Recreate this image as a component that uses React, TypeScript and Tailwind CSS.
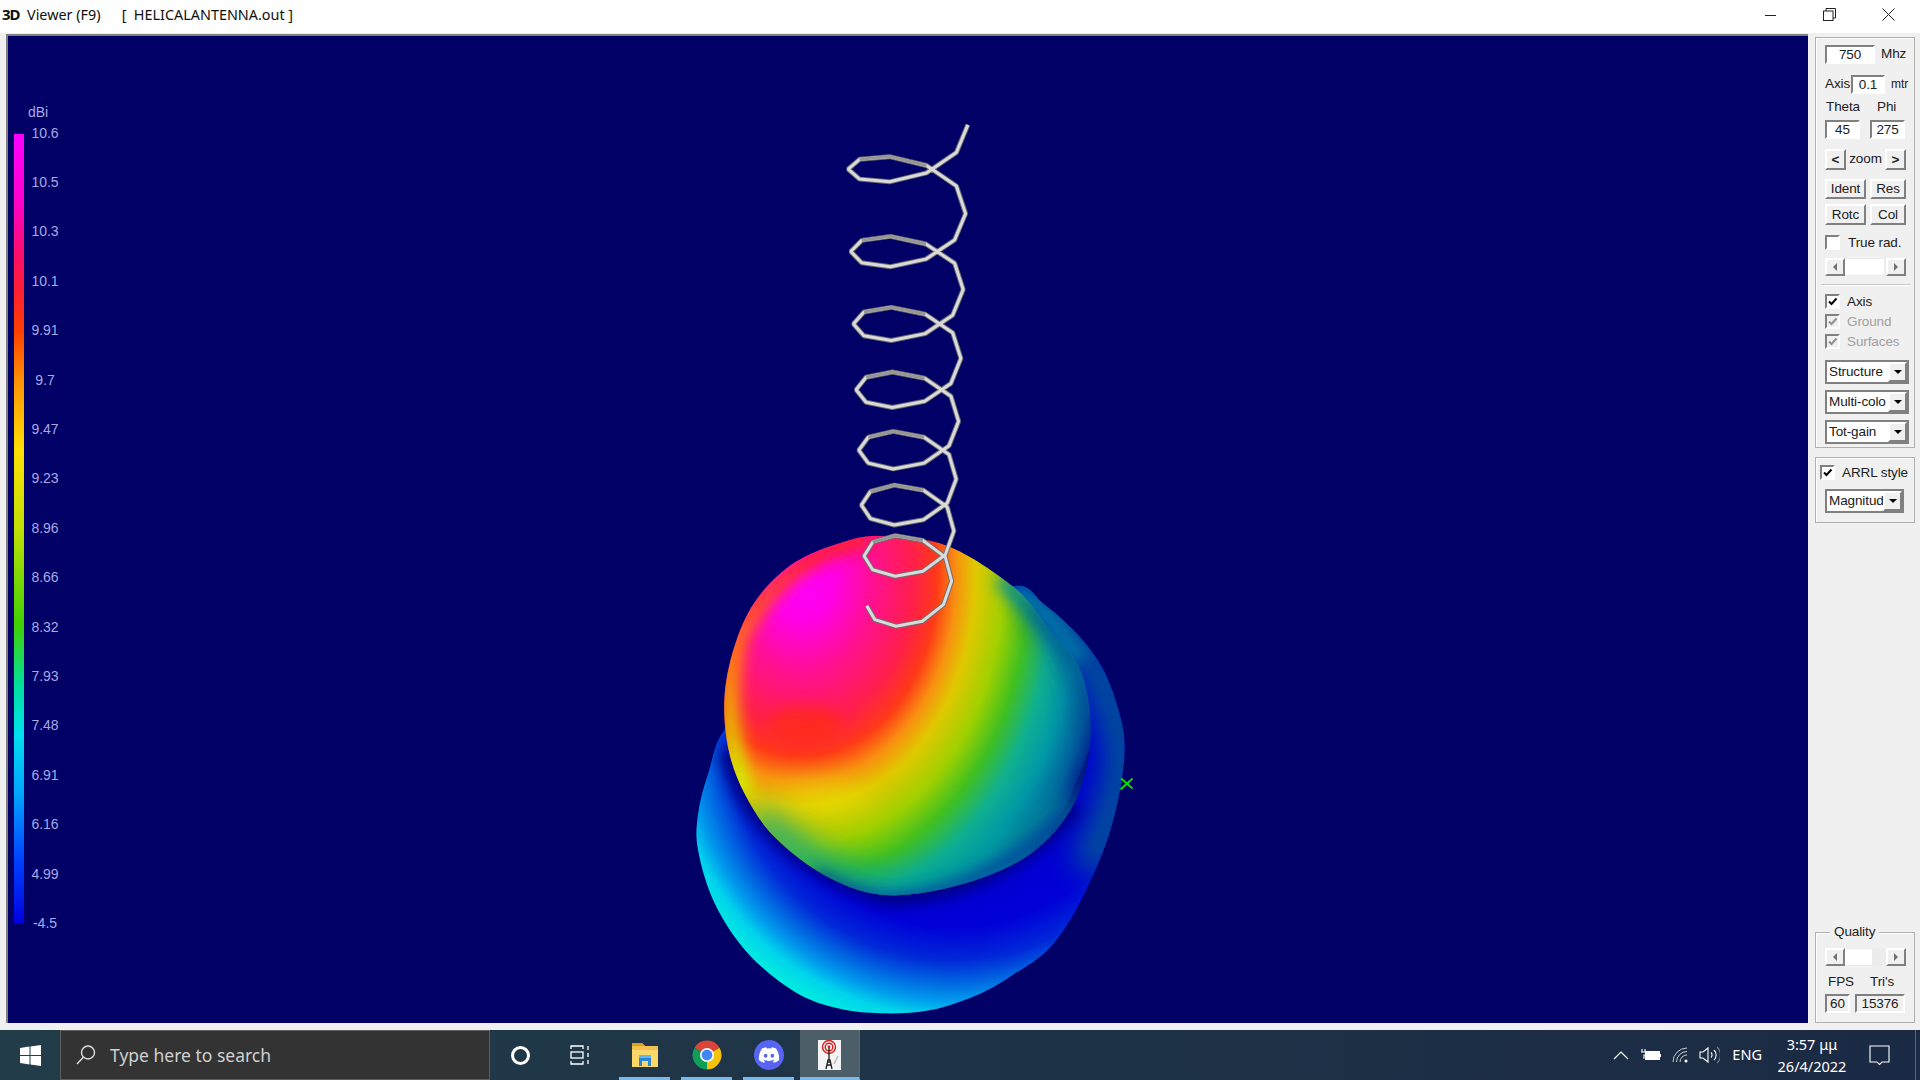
import { FaDiscord } from "react-icons/fa";

const legend = ["10.6", "10.5", "10.3", "10.1", "9.91", "9.7", "9.47", "9.23", "8.96", "8.66", "8.32", "7.93", "7.48", "6.91", "6.16", "4.99", "-4.5"];

// outlines traced from the plot, in zoom coordinates (3x, origin 680,520)
const upperBlob: [number, number][] = [
  [600, 45], [480, 65], [340, 125], [230, 230], [165, 360], [130, 520], [140, 680], [190, 820], [280, 950], [440, 1070],
  [620, 1125], [850, 1090], [1050, 1000], [1180, 850], [1230, 650], [1200, 450], [1100, 320], [1000, 200], [800, 75],
];
const lowerBlob: [number, number][] = [
  [135, 620], [80, 760], [50, 880], [50, 990], [100, 1150], [200, 1300], [340, 1415], [470, 1465], [600, 1480], [750, 1470], [900, 1420],
  [1000, 1362], [1100, 1290], [1180, 1180], [1265, 1000], [1310, 850], [1332, 700], [1320, 590], [1270, 450], [1190, 340], [1090, 250], [1000, 195], [800, 300], [300, 500],
];

function smooth(points: [number, number][]) {
  const n = points.length;
  let d = `M${points[0][0]} ${points[0][1]}`;
  for (let i = 0; i < n; i++) {
    const p0 = points[(i - 1 + n) % n];
    const p1 = points[i];
    const p2 = points[(i + 1) % n];
    const p3 = points[(i + 2) % n];
    d += `C${p1[0] + (p2[0] - p0[0]) / 6} ${p1[1] + (p2[1] - p0[1]) / 6} ${p2[0] - (p3[0] - p1[0]) / 6} ${p2[1] - (p3[1] - p1[1]) / 6} ${p2[0]} ${p2[1]}`;
  }
  return d + "Z";
}

// helix wire: one entry per turn, right-hand extreme y of each turn
const rightY = [123, 212, 288, 357, 420, 478, 530, 580, 630];
function helixPoints() {
  const pts: [number, number][] = [];
  const back: string[] = [];
  rightY.slice(0, -1).forEach((y, n) => {
    const left = 847 + (n * 16) / 6;
    const right = 967 - (n * 14) / 6;
    const cx = (left + right) / 2;
    const rx = (right - left) / 2;
    const last = n === 7 ? 5 : 9;
    const at = (i: number): [number, number] => {
      const a = (Math.PI * 2 * i) / 10;
      return [cx + rx * Math.cos(a), y + ((rightY[n + 1] - y) * i) / 10 + 32 * Math.sin(a)];
    };
    for (let i = 0; i <= last; i++) pts.push(at(i));
    if (n < 7) back.push(`M${at(6).join(" ")}L${at(7).join(" ")}L${at(8).join(" ")}`);
  });
  return { pts, back: back.join("") };
}

function Plot() {
  const upper = smooth(upperBlob);
  const lower = smooth(lowerBlob);
  const { pts, back } = helixPoints();
  const wireLine = "M" + pts.map((p) => `${p[0].toFixed(1)} ${p[1].toFixed(1)}`).join("L");
  return (
    <svg className="absolute inset-0 h-full w-full" viewBox="6 34 1802 989">
      <defs>
        <radialGradient id="lowerFill" gradientUnits="userSpaceOnUse" cx="820" cy="640" r="1000">
          <stop offset="0" stopColor="#0000c0" />
          <stop offset="0.58" stopColor="#0000d8" />
          <stop offset="0.68" stopColor="#0028d8" />
          <stop offset="0.74" stopColor="#0060e0" />
          <stop offset="0.8" stopColor="#0098ec" />
          <stop offset="0.85" stopColor="#00d4ec" />
          <stop offset="0.9" stopColor="#00e8e0" />
        </radialGradient>
        <radialGradient id="upperFill" gradientUnits="userSpaceOnUse" cx="0" cy="0" r="1000" gradientTransform="translate(360 170) scale(0.95 1.25)">
          <stop offset="0" stopColor="#ff00ff" />
          <stop offset="0.1" stopColor="#ff00e8" />
          <stop offset="0.23" stopColor="#ff1090" />
          <stop offset="0.36" stopColor="#ff2048" />
          <stop offset="0.43" stopColor="#ff3a18" />
          <stop offset="0.49" stopColor="#f89010" />
          <stop offset="0.55" stopColor="#e0c800" />
          <stop offset="0.64" stopColor="#a0d000" />
          <stop offset="0.72" stopColor="#40c020" />
          <stop offset="0.8" stopColor="#10b090" />
          <stop offset="0.88" stopColor="#0098a8" />
          <stop offset="0.96" stopColor="#0068a0" />
          <stop offset="1.04" stopColor="#002c98" />
          <stop offset="1.1" stopColor="#000c80" />
        </radialGradient>
        <linearGradient id="leftEdge" gradientUnits="userSpaceOnUse" x1="0" y1="100" x2="0" y2="760">
          <stop offset="0" stopColor="#ff2020" />
          <stop offset="0.5" stopColor="#ff9000" />
          <stop offset="1" stopColor="#d0f000" />
        </linearGradient>
        <clipPath id="upperClip"><path d={upper} /></clipPath>
        <clipPath id="lowerClip"><path d={lower} /></clipPath>
        <filter id="blurSoft" filterUnits="userSpaceOnUse" x="-300" y="-300" width="2200" height="2200"><feGaussianBlur stdDeviation="22" /></filter>
        <filter id="blurWide" filterUnits="userSpaceOnUse" x="-300" y="-300" width="2200" height="2200"><feGaussianBlur stdDeviation="45" /></filter>
      </defs>

      <g transform="translate(680 520) scale(0.33333)">
        <path d={lower} fill="url(#lowerFill)" />
        <g clipPath="url(#lowerClip)">
          <path d="M1000 195Q1280 380 1332 700Q1320 860 1220 1050" fill="none" stroke="#006488" strokeWidth="110" opacity="0.85" filter="url(#blurWide)" />
          <path d="M1000 200L1100 290L1200 420" fill="none" stroke="#0088a8" strokeWidth="50" opacity="0.8" filter="url(#blurSoft)" />
          <path d="M140 680Q220 1000 620 1125Q950 1110 1180 850" fill="none" stroke="#00007c" strokeWidth="60" filter="url(#blurSoft)" />
        </g>
        <path d={upper} fill="url(#upperFill)" />
        <g clipPath="url(#upperClip)">
          <path d="M560 50Q300 110 170 350Q110 560 190 820" fill="none" stroke="url(#leftEdge)" strokeWidth="50" filter="url(#blurSoft)" />
          <ellipse cx="370" cy="610" rx="110" ry="55" fill="#ff3000" opacity="0.55" filter="url(#blurSoft)" />
          <ellipse cx="420" cy="830" rx="150" ry="40" fill="#e8f000" opacity="0.6" filter="url(#blurWide)" />
          <path d="M960 170L1100 320L1200 450" fill="none" stroke="#0088a0" strokeWidth="50" opacity="0.9" filter="url(#blurSoft)" />
          <path d="M1060 240Q1240 420 1240 650Q1230 900 1050 1000" fill="none" stroke="#00308c" strokeWidth="70" opacity="0.75" filter="url(#blurWide)" />
          <path d="M230 890Q420 1080 620 1120Q900 1105 1180 850" fill="none" stroke="#00a098" strokeWidth="80" opacity="0.85" filter="url(#blurWide)" />
          <path d="M400 1060Q500 1120 620 1140Q900 1125 1160 880" fill="none" stroke="#0038a0" strokeWidth="36" opacity="0.9" filter="url(#blurSoft)" />
        </g>
      </g>

      <path d={wireLine} fill="none" stroke="#6e6e6e" strokeWidth="5" strokeLinejoin="bevel" />
      <path d={wireLine} fill="none" stroke="#dadada" strokeWidth="3" strokeLinejoin="bevel" />
      <path d={back} fill="none" stroke="#969696" strokeWidth="3" />
      <path d="M1120.5 778L1132 788M1120 789L1132 778" fill="none" stroke="#00e000" strokeWidth="2" />
    </svg>
  );
}

function Sunken({ className, children }: { className: string; children?: React.ReactNode }) {
  return (
    <div className={`flex h-[19px] items-center justify-center border-2 border-t-[#808080] border-l-[#808080] border-r-white border-b-white ${className}`}>
      {children}
    </div>
  );
}

function Btn({ className, children }: { className: string; children: React.ReactNode }) {
  return (
    <div className={`flex items-center justify-center border-2 border-t-white border-l-white border-r-[#808080] border-b-[#808080] bg-[#f0f0f0] ${className}`}>
      {children}
    </div>
  );
}

function Check({ label, disabled, className }: { label: string; disabled?: boolean; className?: string }) {
  return (
    <div className={`flex h-[15px] items-center ${className ?? ""}`}>
      <div className={`flex h-[15px] w-[15px] items-center justify-center border-2 border-t-[#808080] border-l-[#808080] border-r-white border-b-white ${disabled ? "bg-[#f0f0f0]" : "bg-white"}`}>
        <svg width="11" height="11" viewBox="0 0 11 11">
          <path d="M2 5.5L4.5 8L9.5 2.5" fill="none" stroke={disabled ? "#909090" : "#000000"} strokeWidth="2" />
        </svg>
      </div>
      <span className={`ml-[7px] ${disabled ? "text-[#a0a0a0]" : ""}`}>{label}</span>
    </div>
  );
}

function Combo({ label, className }: { label: string; className: string }) {
  return (
    <div className={`flex h-[24px] items-center overflow-hidden border-2 border-[#808080] bg-white ${className}`}>
      <span className="flex-1 overflow-hidden pl-[2px] whitespace-nowrap">{label}</span>
      <Btn className="h-[20px] w-[19px] shrink-0">
        <span className="h-0 w-0 border-x-[4px] border-t-[4px] border-x-transparent border-t-black" />
      </Btn>
    </div>
  );
}

function Scroll({ thumb }: { thumb: string }) {
  return (
    <div className="flex h-[18px] w-[81px] items-center bg-[#ececec]">
      <Btn className="h-[18px] w-[20px] text-[#707070]">
        <span className="h-0 w-0 border-y-[4px] border-r-[4px] border-y-transparent border-r-current" />
      </Btn>
      <div className={`h-[16px] bg-white ${thumb}`} />
      <div className="flex-1" />
      <Btn className="h-[18px] w-[20px] text-[#707070]">
        <span className="h-0 w-0 border-y-[4px] border-l-[4px] border-y-transparent border-l-current" />
      </Btn>
    </div>
  );
}

function Sidebar() {
  return (
    <div className="ml-[7px] flex w-[100px] flex-col pt-[3px] font-['Liberation_Sans',sans-serif] text-[13.5px] leading-none tracking-[-0.1px] text-[#202020]">
      <div className="h-[411px] border border-[#b0b0b0] pt-[7px] pl-[9px] shadow-[inset_1px_1px_0_#ffffff]">
        <div className="flex items-center">
          <Sunken className="w-[50px] bg-white">750</Sunken>
          <span className="ml-[6px] -mt-[2px]">Mhz</span>
        </div>
        <div className="mt-[11px] flex items-center">
          <span className="-mt-[2px] w-[26px]">Axis</span>
          <Sunken className="w-[34px] bg-white">0.1</Sunken>
          <span className="ml-[6px] -mt-[2px] text-[12px]">mtr</span>
        </div>
        <div className="mt-[6px] flex h-[14px] items-center pl-[1px]">
          <span className="w-[51px]">Theta</span>
          <span>Phi</span>
        </div>
        <div className="mt-[6px] flex gap-[10px]">
          <Sunken className="w-[35px] bg-white">45</Sunken>
          <Sunken className="w-[35px] bg-white">275</Sunken>
        </div>
        <div className="mt-[10px] flex items-center">
          <Btn className="h-[21px] w-[21px] font-bold">&lt;</Btn>
          <span className="-mt-[2px] w-[39px] text-center">zoom</span>
          <Btn className="h-[21px] w-[21px] font-bold">&gt;</Btn>
        </div>
        <div className="mt-[9px] flex gap-[4px]">
          <Btn className="h-[20px] w-[41px]">Ident</Btn>
          <Btn className="h-[20px] w-[36px]">Res</Btn>
        </div>
        <div className="mt-[5px] flex gap-[4px]">
          <Btn className="h-[21px] w-[41px]">Rotc</Btn>
          <Btn className="h-[21px] w-[36px]">Col</Btn>
        </div>
        <div className="mt-[10px] flex h-[15px] items-center">
          <div className="h-[15px] w-[15px] border-2 border-t-[#808080] border-l-[#808080] border-r-white border-b-white bg-white" />
          <span className="ml-[8px]">True rad.</span>
        </div>
        <div className="mt-[8px]">
          <Scroll thumb="w-[39px]" />
        </div>
        <div className="mt-[8px] -ml-[4px] h-[2px] w-[90px] border-t border-b border-t-[#c8c8c8] border-b-white" />
        <Check label="Axis" className="mt-[8px]" />
        <Check label="Ground" disabled className="mt-[5px]" />
        <Check label="Surfaces" disabled className="mt-[5px]" />
        <Combo label="Structure" className="mt-[11px] w-[84px]" />
        <Combo label="Multi-colo" className="mt-[6px] w-[84px]" />
        <Combo label="Tot-gain" className="mt-[6px] w-[84px]" />
      </div>

      <div className="mt-[9px] h-[66px] border border-[#b0b0b0] pt-[7px] pl-[4px] shadow-[inset_1px_1px_0_#ffffff]">
        <Check label="ARRL style" className="whitespace-nowrap" />
        <Combo label="Magnitude" className="mt-[9px] ml-[5px] w-[79px]" />
      </div>

      <div className="relative mt-auto h-[91px] border border-[#b0b0b0] pt-[15px] pl-[9px] shadow-[inset_1px_1px_0_#ffffff]">
        <span className="absolute -top-[8px] left-[14px] bg-[#f0f0f0] px-[4px]">Quality</span>
        <Scroll thumb="w-[27px]" />
        <div className="mt-[9px] flex h-[14px] items-center pl-[3px]">
          <span className="w-[42px]">FPS</span>
          <span>Tri's</span>
        </div>
        <div className="mt-[5px] flex gap-[5px]">
          <Sunken className="w-[25px]">60</Sunken>
          <Sunken className="w-[50px]">15376</Sunken>
        </div>
      </div>
    </div>
  );
}

function Taskbar() {
  return (
    <div className="flex h-[50px] items-stretch bg-gradient-to-r from-[#223c48] via-[#1e3347] to-[#1b2a44] font-['Noto_Sans',sans-serif] text-white">
      <div className="flex w-[60px] items-center justify-center">
        <svg width="21" height="21" viewBox="0 0 21 21" fill="#ffffff">
          <path d="M0 3L9.5 1.6V10H0ZM10.5 1.4L21 0V10H10.5ZM0 11H9.5V19.4L0 18ZM10.5 11H21V21L10.5 19.6Z" />
        </svg>
      </div>
      <div className="flex w-[430px] items-center border border-[#5c5c5c] bg-[#333333] pl-[13px]">
        <svg width="24" height="24" viewBox="0 0 24 24" fill="none" stroke="#e0e0e0" strokeWidth="1.4">
          <circle cx="14" cy="9.5" r="6.5" />
          <path d="M9.5 14L3 21" />
        </svg>
        <span className="ml-[12px] text-[17.5px] text-[#d0d0d0]">Type here to search</span>
      </div>
      <div className="flex w-[60px] items-center justify-center">
        <div className="h-[19px] w-[19px] rounded-full border-[3px] border-white" />
      </div>
      <div className="flex w-[60px] items-center justify-center">
        <svg width="20" height="20" viewBox="0 0 20 20" fill="none" stroke="#ffffff" strokeWidth="1.3">
          <path d="M1 4V1H13V4M1 16V19H13V16" />
          <rect x="1" y="7" width="12" height="6" />
          <path d="M18 1V5M18 8V12M18 15V19" />
        </svg>
      </div>
      <div className="ml-[9px] flex w-[51px] items-center justify-center border-b-[3px] border-[#76b9ed] pt-[3px]">
        <svg width="28" height="28" viewBox="0 0 28 28">
          <path d="M1 2H11L14 5H27V26H1Z" fill="#f2c14e" />
          <path d="M1 2H11L14 5H1Z" fill="#d9a020" />
          <path d="M1 9H27V26H1Z" fill="#fbd768" />
          <path d="M8 25V17H20V25H17V20H11V25Z" fill="#2b86d8" />
          <rect x="8" y="14" width="12" height="3" fill="#62b6f0" />
        </svg>
      </div>
      <div className="ml-[11px] flex w-[51px] items-center justify-center border-b-[3px] border-[#76b9ed] pt-[3px]">
        <svg width="30" height="30" viewBox="0 0 30 30">
          <path d="M15 15L2.5 7.8A14.4 14.4 0 0 1 27.5 7.8Z" fill="#db4437" />
          <path d="M15 15L27.5 7.8A14.4 14.4 0 0 1 15 29.4Z" fill="#f4c20d" />
          <path d="M15 15L15 29.4A14.4 14.4 0 0 1 2.5 7.8Z" fill="#0f9d58" />
          <circle cx="15" cy="15" r="7" fill="#ffffff" />
          <circle cx="15" cy="15" r="5.4" fill="#4285f4" />
        </svg>
      </div>
      <div className="ml-[11px] flex w-[51px] items-center justify-center border-b-[3px] border-[#76b9ed] pt-[3px]">
        <div className="flex h-[30px] w-[30px] items-center justify-center rounded-full bg-[#5865f2]">
          <FaDiscord size={22} color="#ffffff" />
        </div>
      </div>
      <div className="ml-[6px] flex w-[60px] items-center justify-center border-r border-b-[3px] border-r-[#56666f] border-b-[#76b9ed] bg-[#4c5e68] pt-[3px]">
        <svg width="23" height="30" viewBox="0 0 23 30">
          <rect width="23" height="30" fill="#f4f4f4" />
          <circle cx="11" cy="7" r="6.5" fill="none" stroke="#d81e1e" strokeWidth="1.4" />
          <circle cx="11" cy="7" r="3.8" fill="none" stroke="#d81e1e" strokeWidth="1.4" />
          <circle cx="11" cy="7" r="1.4" fill="#d81e1e" />
          <path d="M11 8V20M8 29L10 20H12L14 29M9 25H13M9.5 22H12.5" fill="none" stroke="#202020" strokeWidth="1.3" />
          <path d="M16 24L20 16" stroke="#b8b8b8" strokeWidth="1.5" />
        </svg>
      </div>

      <div className="ml-auto flex items-center">
        <svg width="16" height="10" viewBox="0 0 16 10" fill="none" stroke="#ffffff" strokeWidth="1.2">
          <path d="M1 9L8 2L15 9" />
        </svg>
        <svg className="ml-[12px]" width="20" height="14" viewBox="0 0 20 14">
          <path d="M1 1V4M4 1V4M0 4H5V7H3V10H2" fill="none" stroke="#ffffff" strokeWidth="1.1" />
          <rect x="4.5" y="3.5" width="14" height="8" fill="#ffffff" stroke="#ffffff" />
          <rect x="18.5" y="6" width="1.5" height="3" fill="#ffffff" />
        </svg>
        <svg className="ml-[11px]" width="16" height="16" viewBox="0 0 16 16" fill="none" stroke="#c8ccd4" strokeWidth="1">
          <path d="M1 15A14 14 0 0 1 15 1M4.5 15A10.5 10.5 0 0 1 15 4.5M8 15A7 7 0 0 1 15 8" />
          <circle cx="14" cy="14" r="1.5" fill="#ffffff" stroke="none" />
        </svg>
        <svg className="ml-[11px]" width="21" height="18" viewBox="0 0 21 18" fill="none" stroke="#ffffff" strokeWidth="1.1">
          <path d="M1 6H4L9 2V16L4 12H1Z" />
          <path d="M12 6.5A3.5 3.5 0 0 1 12 11.5" />
          <path d="M15 4A7 7 0 0 1 15 14" />
          <path d="M18 1A11 11 0 0 1 18 17" stroke="#7a8596" />
        </svg>
        <span className="ml-[12px] text-[14.5px]">ENG</span>
        <div className="ml-[15px] flex w-[70px] flex-col items-center text-[14.5px] leading-[22px]">
          <span>3:57 μμ</span>
          <span>26/4/2022</span>
        </div>
        <svg className="ml-[22px]" width="21" height="21" viewBox="0 0 21 21" fill="none" stroke="#ffffff" strokeWidth="1.1">
          <path d="M1 1H20V17H13L10.5 19.5L8 17H1Z" />
        </svg>
        <div className="ml-[25px] mr-[4px] h-full w-px bg-[#5a6472]" />
      </div>
    </div>
  );
}

export default function App() {
  return (
    <div className="flex h-[1080px] w-[1920px] flex-col overflow-hidden bg-[#f0f0f0]">
      <div className="flex h-[33px] shrink-0 items-center bg-white pb-[4px] font-['Noto_Sans',sans-serif] text-[14.4px] text-[#101010]">
        <span className="ml-[2px] w-[25px] text-[15px] font-bold tracking-[-1px]">3D</span>
        <span>Viewer (F9)</span>
        <span className="ml-[21px] whitespace-pre">[  HELICALANTENNA.out ]</span>
        <div className="ml-auto flex items-center">
          <svg width="12" height="12" viewBox="0 0 12 12" className="mr-[46px]">
            <path d="M0 6.5H11" stroke="#202020" strokeWidth="1" />
          </svg>
          <svg width="13" height="13" viewBox="0 0 13 13" fill="none" stroke="#202020" strokeWidth="1" className="mr-[46px]">
            <rect x="0.5" y="3" width="9.5" height="9.5" />
            <path d="M3 3V0.5H12.5V10H10" />
          </svg>
          <svg width="13" height="13" viewBox="0 0 13 13" fill="none" stroke="#202020" strokeWidth="1" className="mr-[25px]">
            <path d="M0.5 0.5L12.5 12.5M12.5 0.5L0.5 12.5" />
          </svg>
        </div>
      </div>

      <div className="flex min-h-0 flex-1 pt-px pb-[7px] pl-[6px]">
        <div className="relative w-[1802px] shrink-0 border-t-2 border-l-2 border-t-[#808080] border-l-[#808080] bg-[#000066]">
          <Plot />
          <div className="relative flex pt-[69px] pl-[6px] font-['Liberation_Sans',sans-serif] text-[14px] leading-none text-[#a9a9e6]">
            <div className="mt-[29px] h-[790px] w-[10px] bg-[linear-gradient(to_bottom,#ff00ff_0%,#ff00d0_8%,#ff1060_16%,#ff2030_20%,#ff4000_25%,#ff9000_31%,#ffe000_40%,#c0e000_50%,#40d000_62%,#00e0a0_70%,#00e0f0_76%,#00a0ff_84%,#0040ff_92%,#0000e0_100%)]" />
            <div className="ml-[3px] flex w-[36px] flex-col items-center">
              <span className="-ml-[14px] h-[14px]">dBi</span>
              <div className="-mt-[11px] flex flex-col items-center">
                {legend.map((v) => (
                  <span key={v} className="flex h-[49.4px] items-center">{v}</span>
                ))}
              </div>
            </div>
          </div>
        </div>
        <Sidebar />
      </div>

      <Taskbar />
    </div>
  );
}
